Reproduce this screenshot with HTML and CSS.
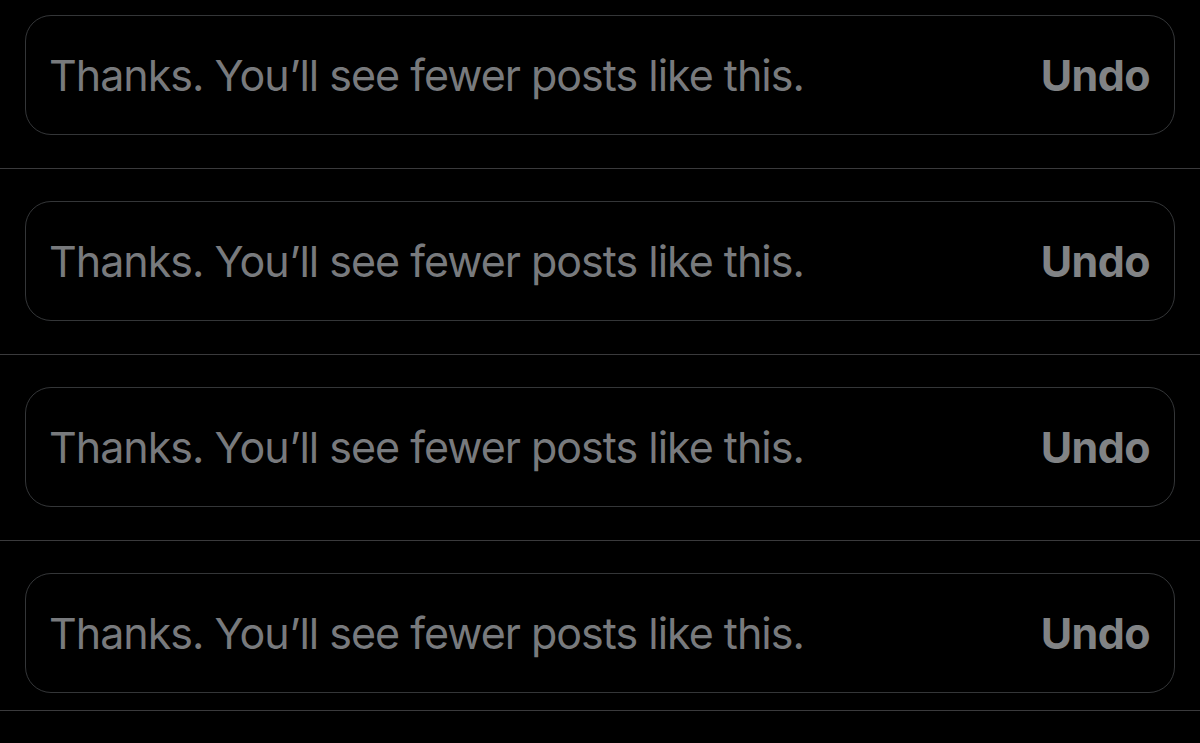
FILE: index.html
```html
<!DOCTYPE html>
<html lang="en">
<head>
<meta charset="utf-8">
<title>Feedback</title>
<link rel="stylesheet" href="styles.css">
</head>
<body>
<ul class="feed">
  <li class="feed-item feed-item--first">
    <div class="notice">
      <span class="notice-text">Thanks. You’ll see fewer posts like this.</span>
      <button class="notice-undo" type="button">Undo</button>
    </div>
  </li>
  <li class="feed-item">
    <div class="notice">
      <span class="notice-text">Thanks. You’ll see fewer posts like this.</span>
      <button class="notice-undo" type="button">Undo</button>
    </div>
  </li>
  <li class="feed-item">
    <div class="notice">
      <span class="notice-text">Thanks. You’ll see fewer posts like this.</span>
      <button class="notice-undo" type="button">Undo</button>
    </div>
  </li>
  <li class="feed-item feed-item--last">
    <div class="notice">
      <span class="notice-text">Thanks. You’ll see fewer posts like this.</span>
      <button class="notice-undo" type="button">Undo</button>
    </div>
  </li>
</ul>
</body>
</html>
```

FILE: styles.css
```css
html, body {
  margin: 0;
  padding: 0;
  background: #000;
}

body {
  width: 1200px;
  height: 743px;
  overflow: hidden;
  font-family: Inter, "Noto Sans", "Liberation Sans", sans-serif;
}

.feed {
  list-style: none;
  margin: 0;
  padding: 0;
}

.feed-item {
  padding: 32px 25px 33px;
  border-bottom: 1px solid #3a3a3c;
}

.feed-item--first {
  padding-top: 15px;
}

.feed-item--last {
  padding-bottom: 17px;
}

.notice {
  box-sizing: border-box;
  height: 120px;
  border: 1px solid #343638;
  border-radius: 26px;
  display: flex;
  align-items: center;
  justify-content: space-between;
  padding: 0 24px 0 23px;
}

.notice-text {
  color: #787a7d;
  font-size: 43px;
  font-weight: 400;
  letter-spacing: -1px;
}

.notice-undo {
  background: none;
  border: 0;
  padding: 0;
  color: #818385;
  font-family: inherit;
  font-size: 43px;
  font-weight: 700;
  letter-spacing: -0.6px;
  cursor: pointer;
}
```
